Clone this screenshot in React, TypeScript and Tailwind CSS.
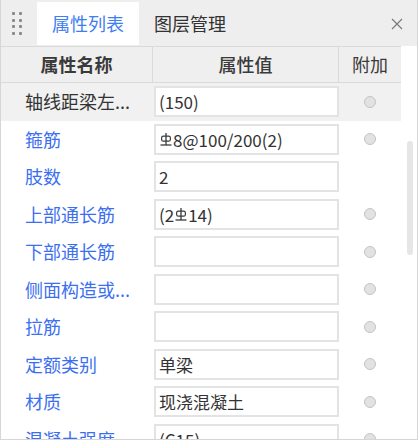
import React from 'react';

const Rebar: React.FC = () => (
  <svg width="12" height="13" viewBox="0 0 12 13" className="inline-block align-[4px] mx-[1px]">
    <line x1="6" y1="0" x2="6" y2="12" stroke="#3a3a3a" strokeWidth="1.3" />
    <rect x="1.6" y="3.2" width="8.8" height="5" rx="1.8" fill="none" stroke="#3a3a3a" strokeWidth="1.2" />
    <line x1="0.5" y1="12" x2="11.5" y2="12" stroke="#3a3a3a" strokeWidth="1.3" />
  </svg>
);

type Row = {
  label: string;
  value: React.ReactNode;
  dot: boolean;
  muted?: boolean;
};

const rows: Row[] = [
  { label: '轴线距梁左...', value: '(150)', dot: true, muted: true },
  {
    label: '箍筋',
    value: (
      <>
        <Rebar />8@100/200(2)
      </>
    ),
    dot: true,
  },
  { label: '肢数', value: '2', dot: false },
  {
    label: '上部通长筋',
    value: (
      <>
        (2<Rebar />14)
      </>
    ),
    dot: true,
  },
  { label: '下部通长筋', value: '', dot: true },
  { label: '侧面构造或...', value: '', dot: true },
  { label: '拉筋', value: '', dot: true },
  { label: '定额类别', value: '单梁', dot: true },
  { label: '材质', value: '现浇混凝土', dot: true },
  { label: '混凝土强度', value: '(C15)', dot: true },
];

export default function App() {
  return (
    <div className="w-[420px] h-[441px] bg-white overflow-hidden font-['Noto_Sans_CJK_SC','Microsoft_YaHei',sans-serif]">
      <div className="w-[418px] h-[440px] border-l border-r border-b border-[#d6d6d6] flex flex-col overflow-hidden">
        {/* Tab bar */}
        <div className="h-[46px] shrink-0 bg-[#eeeeee] flex items-stretch pt-[2px] pb-[1px]">
          <div className="w-[36px] flex items-center justify-center">
            <div className="grid grid-cols-2 gap-x-[4px] gap-y-[3.5px] -ml-[4px]">
              {Array.from({ length: 8 }).map((_, i) => (
                <span key={i} className="block w-[3px] h-[3px] rounded-[1px] bg-[#8a8a8a]" />
              ))}
            </div>
          </div>
          <div className="w-[102px] bg-white flex items-center justify-center text-[18px] text-[#3f7ef2]">
            属性列表
          </div>
          <div className="w-[102px] flex items-center justify-center text-[18px] text-[#333333]">
            图层管理
          </div>
          <div className="flex-1 flex items-center justify-end pr-[14px]">
            <svg width="12" height="12" viewBox="0 0 12 12">
              <path d="M1 1L11 11M11 1L1 11" stroke="#7a7a7a" strokeWidth="1.2" />
            </svg>
          </div>
        </div>

        {/* Body */}
        <div className="flex flex-1 min-h-0">
          <div className="w-[400px] shrink-0">
            {/* Header */}
            <div className="h-[37px] flex bg-[#efefef] border-t border-b border-[#dadada] text-[18px] text-[#3a3a3a]">
              <div className="w-[152px] flex items-center justify-center border-r border-[#dadada] font-bold">属性名称</div>
              <div className="w-[186px] flex items-center justify-center border-r border-[#dadada] font-medium">属性值</div>
              <div className="flex-1 flex items-center justify-center">附加</div>
            </div>

            {rows.map((r) => (
              <div
                key={r.label}
                className={`h-[37.5px] flex items-center ${r.muted ? 'bg-[#f1f1f1]' : 'bg-white'}`}
              >
                <div
                  className={`w-[152px] pl-[24px] text-[18px] whitespace-nowrap ${
                    r.muted ? 'text-[#333333]' : 'text-[#3b6ff0]'
                  }`}
                >
                  {r.label}
                </div>
                <div className="w-[185px] h-[31px] ml-[1px] border-2 border-[#e3e3e3] bg-white flex items-center pl-[3px] text-[17px] text-[#333333] whitespace-nowrap overflow-hidden">
                  {r.value}
                </div>
                <div className="flex-1 flex items-center justify-center">
                  {r.dot && (
                    <span className="block w-[12px] h-[12px] rounded-full bg-[#e2e2e2] border border-[#c4c4c4]" />
                  )}
                </div>
              </div>
            ))}
          </div>

          {/* Scrollbar */}
          <div className="flex-1 pt-[95px] flex justify-center pl-[2px]">
            <div className="w-[6px] h-[114px] rounded-full bg-[#e6e6e6]" />
          </div>
        </div>
      </div>
    </div>
  );
}
